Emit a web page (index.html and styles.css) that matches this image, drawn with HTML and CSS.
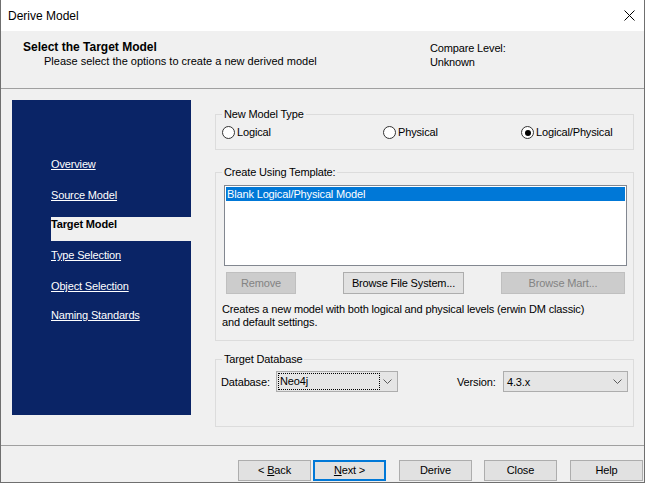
FILE: index.html
```html
<!DOCTYPE html>
<html>
<head>
<meta charset="utf-8">
<link rel="stylesheet" href="styles.css">
</head>
<body>
<div class="window">
  <div class="titlebar">
    <span class="title">Derive Model</span>
    <svg class="close" width="11" height="11" viewBox="0 0 11 11"><path d="M0.5 0.5 L10.5 10.5 M10.5 0.5 L0.5 10.5" stroke="#000" stroke-width="1" fill="none"/></svg>
  </div>
  <div class="header">
    <div class="head-left">
      <div class="head-title">Select the Target Model</div>
      <div class="head-sub">Please select the options to create a new derived model</div>
    </div>
    <div class="head-right">
      <div>Compare Level:</div>
      <div class="head-value">Unknown</div>
    </div>
  </div>
  <div class="main">
    <nav class="nav">
      <a class="nav-link first">Overview</a>
      <a class="nav-link gap18">Source Model</a>
      <div class="nav-current">Target Model</div>
      <a class="nav-link gap8">Type Selection</a>
      <a class="nav-link gap18">Object Selection</a>
      <a class="nav-link gap16">Naming Standards</a>
    </nav>
    <div class="content">
      <div class="group g1">
        <span class="legend">New Model Type</span>
        <div class="radios">
          <label class="radio r1"><span class="circle"></span>Logical</label>
          <label class="radio r2"><span class="circle"></span>Physical</label>
          <label class="radio r3"><span class="circle checked"></span>Logical/Physical</label>
        </div>
      </div>
      <div class="group g2">
        <span class="legend">Create Using Template:</span>
        <div class="listbox">
          <div class="list-item selected">Blank Logical/Physical Model</div>
        </div>
        <div class="btn-row">
          <button class="btn disabled b-remove">Remove</button>
          <button class="btn b-browse">Browse File System...</button>
          <button class="btn disabled b-mart">Browse Mart...</button>
        </div>
        <p class="desc">Creates a new model with both logical and physical levels (erwin DM classic)<br>and default settings.</p>
      </div>
      <div class="group g3">
        <span class="legend">Target Database</span>
        <div class="db-row">
          <span class="lbl lbl-db">Database:</span>
          <div class="combo combo-db"><span class="focus">Neo4j</span><svg class="chev" width="9" height="5" viewBox="0 0 9 5"><path d="M0.5 0.5 L4.5 4.5 L8.5 0.5" stroke="#5a5a5a" fill="none"/></svg></div>
          <span class="lbl lbl-ver">Version:</span>
          <div class="combo combo-ver"><span class="val">4.3.x</span><svg class="chev" width="9" height="5" viewBox="0 0 9 5"><path d="M0.5 0.5 L4.5 4.5 L8.5 0.5" stroke="#5a5a5a" fill="none"/></svg></div>
        </div>
      </div>
    </div>
  </div>
  <div class="footer">
    <button class="btn fbtn"><span>&lt; <u>B</u>ack</span></button>
    <button class="btn fbtn default"><span><u>N</u>ext &gt;</span></button>
    <button class="btn fbtn gap13">Derive</button>
    <button class="btn fbtn gap12">Close</button>
    <button class="btn fbtn gap13">Help</button>
  </div>
</div>
</body>
</html>
```
FILE: styles.css
```css
html, body {
  margin: 0;
  padding: 0;
}
body {
  width: 645px;
  height: 483px;
  overflow: hidden;
  background: #f0f0f0;
  font-family: "Liberation Sans", Arial, sans-serif;
  font-size: 11px;
  letter-spacing: -0.15px;
  color: #000;
}
.window {
  width: 645px;
  height: 483px;
  box-sizing: border-box;
  border-left: 1px solid #6f6f6f;
  border-right: 1px solid #6f6f6f;
  border-bottom: 1px solid #6f6f6f;
  display: flex;
  flex-direction: column;
  background: #f0f0f0;
}
.titlebar {
  height: 31px;
  flex: none;
  background: #fff;
  display: flex;
  align-items: center;
  padding-left: 7px;
  padding-right: 9px;
}
.title {
  font-size: 12px;
  letter-spacing: 0;
}
.close {
  margin-left: auto;
}
.header {
  flex: none;
  border-bottom: 1px solid #a0a0a0;
  display: flex;
  padding: 9px 0 0 22px;
  height: 48px;
  line-height: 14px;
}
.head-left {
  width: 407px;
}
.head-title {
  font-weight: bold;
  font-size: 12px;
  letter-spacing: 0;
}
.head-sub {
  padding-left: 21px;
  letter-spacing: 0;
}
.head-right {
  padding-top: 1px;
}
.main {
  height: 356px;
  flex: none;
  display: flex;
}
.nav {
  margin: 11px 0 0 11px;
  width: 179px;
  height: 315px;
  background: #0a2466;
  display: flex;
  flex-direction: column;
  align-items: flex-start;
}
.nav-link {
  color: #fff;
  text-decoration: underline;
  line-height: 13px;
  margin-left: 39px;
}
.nav-link.first { margin-top: 58px; }
.gap18 { margin-top: 18px; }
.gap8 { margin-top: 8px; }
.gap16 { margin-top: 16px; }
.nav-current {
  margin-top: 15px;
  margin-left: 39px;
  align-self: stretch;
  height: 24px;
  background: #f0f0f0;
  font-weight: bold;
  line-height: 13px;
  padding-top: 1px;
  box-sizing: border-box;
}
.content {
  margin-left: 24px;
  padding-top: 25px;
  width: 419px;
  display: flex;
  flex-direction: column;
}
.group {
  position: relative;
  border: 1px solid #dcdcdc;
  box-sizing: border-box;
  width: 419px;
}
.legend {
  position: absolute;
  top: -7px;
  left: 6px;
  padding: 0 2px;
  background: #f0f0f0;
  line-height: 13px;
}
.g1 {
  height: 36px;
  padding: 11px 0 0 6px;
}
.radios {
  display: flex;
  height: 13px;
}
.radio {
  display: flex;
  align-items: center;
  line-height: 13px;
}
.r1 { width: 161px; }
.r2 { width: 138px; }
.circle {
  width: 13px;
  height: 13px;
  box-sizing: border-box;
  border: 1px solid #333;
  border-radius: 50%;
  background: #fff;
  margin-right: 2px;
  display: flex;
  align-items: center;
  justify-content: center;
}
.circle.checked::after {
  content: "";
  width: 6px;
  height: 6px;
  border-radius: 50%;
  background: #000;
}
.g2 {
  margin-top: 22px;
  height: 169px;
  padding: 12px 6px 0 8px;
}
.listbox {
  height: 81px;
  box-sizing: border-box;
  border: 1px solid #828790;
  background: #fff;
  padding: 1px;
}
.list-item {
  height: 14px;
  line-height: 14px;
  padding-left: 1px;
}
.list-item.selected {
  background: #0078d7;
  color: #fff;
}
.btn {
  font-family: inherit;
  font-size: 11px;
  letter-spacing: -0.15px;
  color: #000;
  background: #e1e1e1;
  border: 1px solid #adadad;
  padding: 0;
  margin: 0;
  box-sizing: border-box;
  height: 22px;
  line-height: 20px;
  text-align: center;
}
.btn.disabled {
  background: #cccccc;
  border-color: #bfbfbf;
  color: #838383;
}
.btn-row {
  display: flex;
  margin-top: 6px;
}
.b-remove { width: 70px; margin-left: 2px; }
.b-browse { width: 121px; margin-left: 47px; }
.b-mart { width: 124px; margin-left: 37px; }
.desc {
  margin: 9px 0 0 -2px;
  line-height: 13px;
}
.g3 {
  margin-top: 18px;
  height: 68px;
  padding: 11px 0 0 5px;
}
.db-row {
  display: flex;
  align-items: center;
  height: 21px;
}
.lbl-db { width: 55px; }
.lbl-ver { width: 46px; margin-left: 59px; }
.combo {
  height: 21px;
  box-sizing: border-box;
  border: 1px solid #adadad;
  background: #e5e5e5;
  display: flex;
  align-items: center;
}
.combo-db { width: 122px; }
.combo-ver { width: 125px; }
.focus {
  margin-left: 1px;
  width: 102px;
  height: 17px;
  box-sizing: border-box;
  border: 1px dotted #000;
  line-height: 15px;
  padding-left: 1px;
}
.val {
  padding-left: 3px;
}
.chev {
  margin-left: auto;
  margin-right: 5px;
}
.footer {
  flex: 1;
  border-top: 1px solid #a0a0a0;
  display: flex;
  align-items: flex-start;
  padding: 14px 0 0 237px;
}
.fbtn {
  width: 73px;
  height: 21px;
  line-height: 19px;
}
.fbtn.default {
  border: 2px solid #0078d7;
  margin-left: 2px;
  line-height: 17px;
}
.fbtn.gap13 { margin-left: 13px; margin-top: 0; }
.fbtn.gap12 { margin-left: 12px; margin-top: 0; }
```
